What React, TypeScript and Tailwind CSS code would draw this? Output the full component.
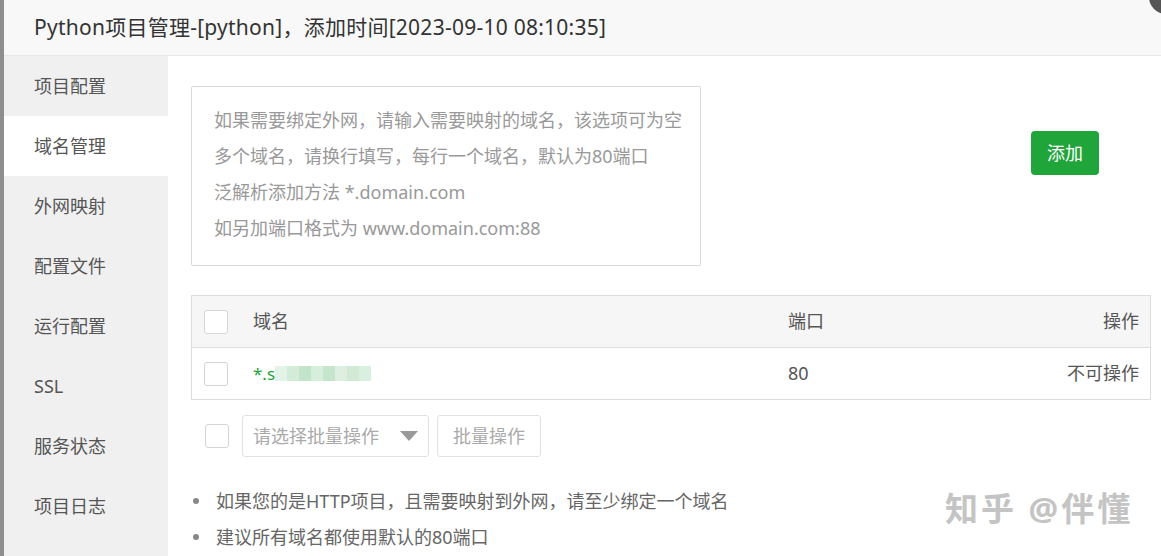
import React from "react";

const font = { fontFamily: '"Noto Sans", "Noto Sans CJK SC", sans-serif' };

function Box({ className = "" }: { className?: string }) {
  return <div className={"w-[24px] h-[24px] border border-[#d5d5d5] rounded-[3px] bg-white " + className} />;
}

export default function App() {
  const menu = ["项目配置", "域名管理", "外网映射", "配置文件", "运行配置", "SSL", "服务状态", "项目日志"];
  return (
    <div className="relative w-[1161px] h-[556px] overflow-hidden bg-white flex" style={font}>
      <div className="w-[4px] h-full bg-[#8e8e8e] shrink-0" />
      <div className="flex-1 flex flex-col">
        <div className="h-[56px] shrink-0 bg-[#f8f8f8] border-b border-[#e8e8e8] flex items-center pl-[30px] text-[21px] text-[#333] tracking-[0.25px]">
          Python项目管理-[python]，添加时间[2023-09-10 08:10:35]
        </div>
        <div className="flex-1 flex">
          <div className="w-[164px] shrink-0 bg-[#f0f0f0] flex flex-col">
            {menu.map((m, i) => (
              <div
                key={m}
                className={
                  "h-[60px] flex items-center pl-[30px] text-[18px] text-[#555] " + (i === 1 ? "bg-white" : "")
                }
              >
                {m}
              </div>
            ))}
          </div>
          <div className="flex-1 flex flex-col pl-[23px] pr-[11px] pt-[30px]">
            <div className="flex items-start">
              <div className="w-[510px] h-[180px] shrink-0 border border-[#d9d9d9] rounded-[2px] pl-[22px] pr-[10px] pt-[15px] text-[18px] leading-[36px] text-[#999] whitespace-nowrap overflow-hidden">
                <div>如果需要绑定外网，请输入需要映射的域名，该选项可为空</div>
                <div>多个域名，请换行填写，每行一个域名，默认为80端口</div>
                <div>泛解析添加方法 *.domain.com</div>
                <div>如另加端口格式为 www.domain.com:88</div>
              </div>
              <div className="ml-[330px] mt-[45px] w-[68px] h-[44px] bg-[#20a53a] rounded-[4px] text-white text-[18px] flex items-center justify-center">
                添加
              </div>
            </div>
            <div className="mt-[29px] border border-[#dddddd] w-[960px]">
              <div className="h-[52px] bg-[#f6f6f6] border-b border-[#dddddd] flex items-center text-[18px] text-[#555]">
                <Box className="ml-[12px]" />
                <div className="ml-[25px] w-[535px]">域名</div>
                <div className="flex-1">端口</div>
                <div className="pr-[11px]">操作</div>
              </div>
              <div className="h-[51px] flex items-center text-[18px] text-[#555]">
                <Box className="ml-[12px]" />
                <div className="ml-[25px] w-[535px] flex items-center">
                  <span className="text-[#20a53a] text-[17px]">*.s</span>
                  <span className="inline-flex h-[15px]">
                    <span className="w-[12px] bg-[#e4f3e7]" />
                    <span className="w-[12px] bg-[#d3ecd9]" />
                    <span className="w-[12px] bg-[#c2e4cb]" />
                    <span className="w-[12px] bg-[#d6eedc]" />
                    <span className="w-[12px] bg-[#c5e6cd]" />
                    <span className="w-[12px] bg-[#deefe2]" />
                    <span className="w-[12px] bg-[#d0ead6]" />
                    <span className="w-[12px] bg-[#d9efdf]" />
                  </span>
                </div>
                <div className="flex-1">80</div>
                <div className="pr-[11px]">不可操作</div>
              </div>
            </div>
            <div className="mt-[15px] flex items-center">
              <Box className="ml-[14px]" />
              <div className="ml-[13px] w-[187px] h-[42px] border border-[#e2e2e2] rounded-[3px] flex items-center justify-between pl-[10px] pr-[10px] text-[18px] text-[#aaa]">
                <span>请选择批量操作</span>
                <svg width="18" height="10" viewBox="0 0 18 10">
                  <polygon points="0,0 18,0 9,10" fill="#999" />
                </svg>
              </div>
              <div className="ml-[8px] w-[104px] h-[42px] border border-[#e2e2e2] rounded-[3px] flex items-center justify-center text-[18px] text-[#aaa]">
                批量操作
              </div>
            </div>
            <div className="mt-[26px] flex flex-col text-[18px] text-[#666] leading-[36px]">
              <div className="flex items-center">
                <span className="w-[6px] h-[6px] rounded-full bg-[#888] ml-[2px] mr-[17px]" />
                如果您的是HTTP项目，且需要映射到外网，请至少绑定一个域名
              </div>
              <div className="flex items-center">
                <span className="w-[6px] h-[6px] rounded-full bg-[#888] ml-[2px] mr-[17px]" />
                建议所有域名都使用默认的80端口
              </div>
            </div>
          </div>
        </div>
      </div>
      <div className="absolute left-[945px] top-[484px] text-[33px] font-bold text-[#c4c4c4] tracking-[3px]">
        知乎 @伴懂
      </div>
      <div className="absolute right-[-22px] top-[-20px] w-[34px] h-[34px] rounded-full bg-[#555]" />
    </div>
  );
}
